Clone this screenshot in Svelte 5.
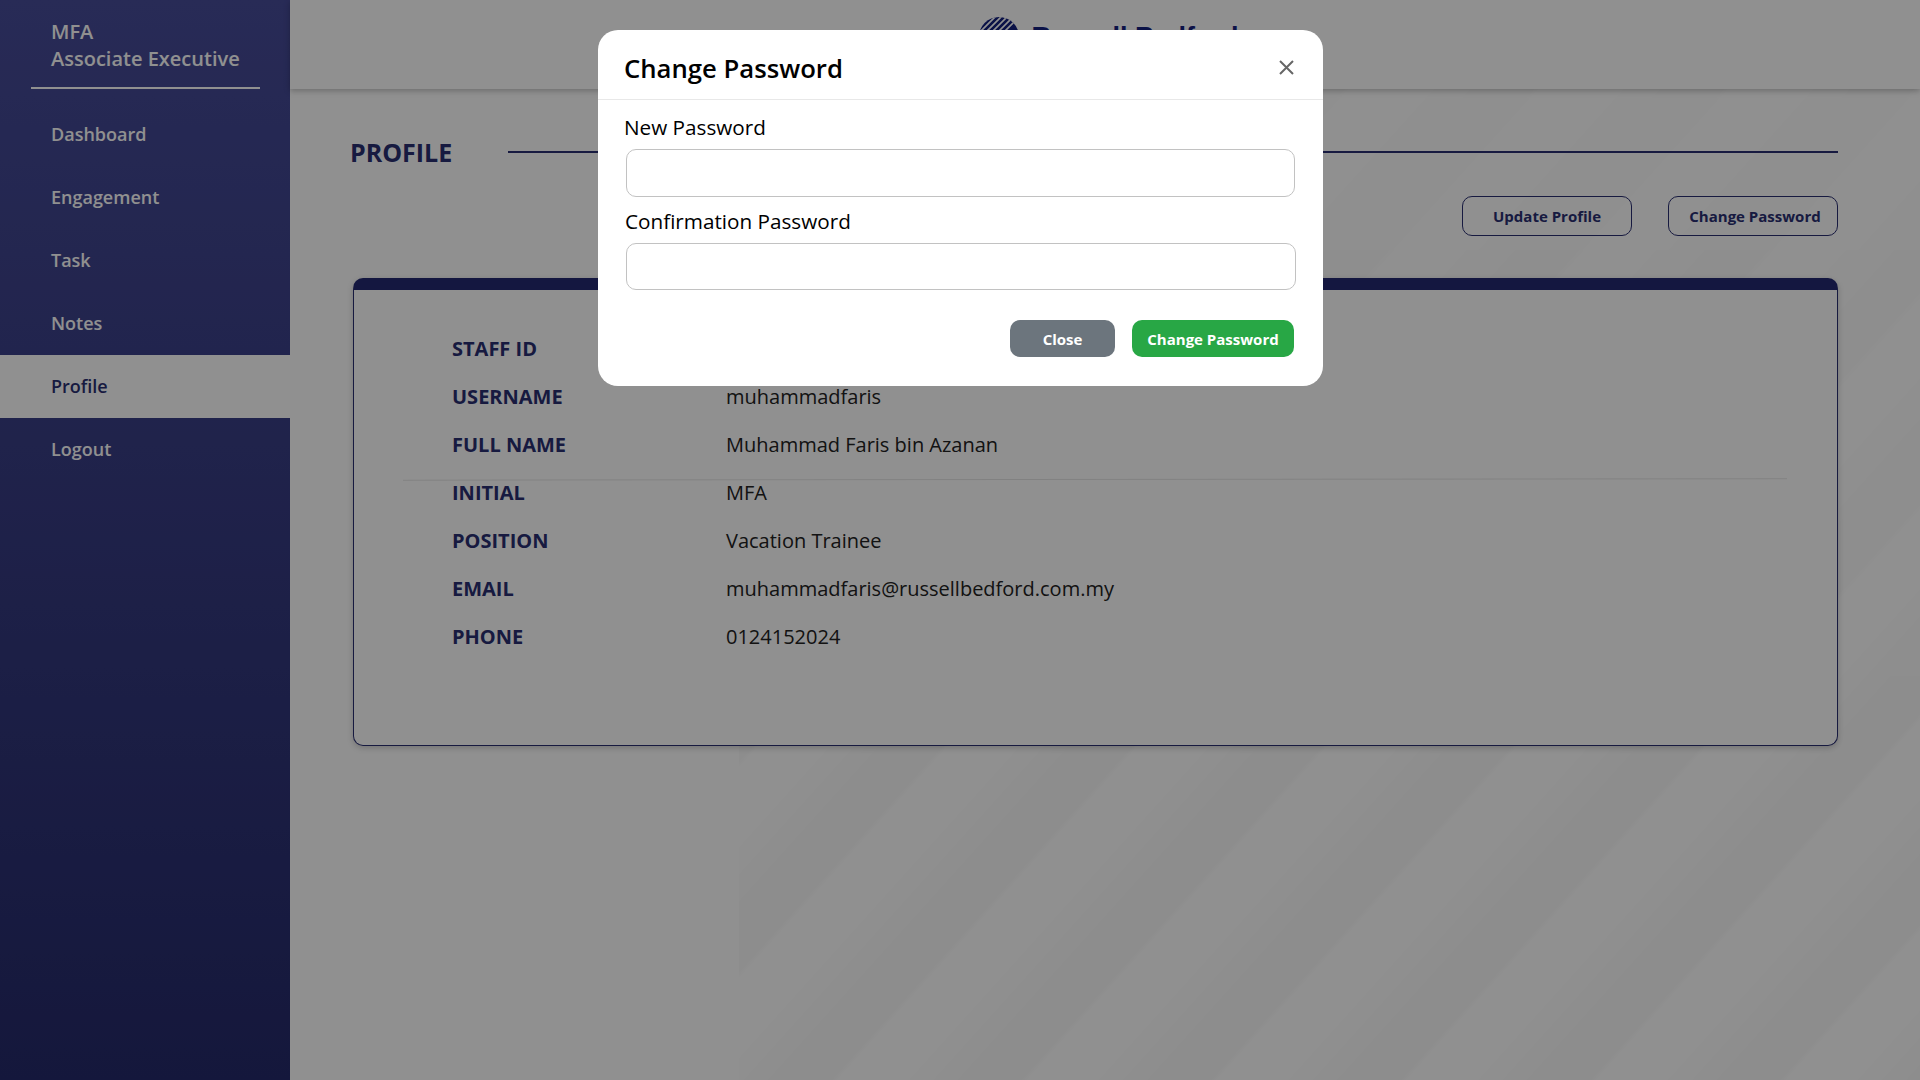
<script>
  const nav = ['Dashboard', 'Engagement', 'Task', 'Notes', 'Profile', 'Logout'];
  const top = [['STAFF ID', ''], ['USERNAME', 'muhammadfaris'], ['FULL NAME', 'Muhammad Faris bin Azanan']];
  const bottom = [['INITIAL', 'MFA'], ['POSITION', 'Vacation Trainee'], ['EMAIL', 'muhammadfaris@russellbedford.com.my'], ['PHONE', '0124152024']];
</script>

<div class="app">
  <aside class="sidebar">
    <div class="who"><div>MFA</div><div>Associate Executive</div></div>
    <nav>
      {#each nav as item}
        <div class="item" class:active={item === 'Profile'}>{item}</div>
      {/each}
    </nav>
  </aside>
  <main>
    <div class="stripes"></div>
    <header>
      <svg class="globe" viewBox="0 0 40 40" width="40" height="40">
        <defs>
          <clipPath id="gc"><circle cx="20" cy="20" r="20" /></clipPath>
        </defs>
        <circle cx="20" cy="20" r="20" fill="#14207f" />
        <g clip-path="url(#gc)" stroke="#fff" stroke-width="1.7">
          <path d="M-2 12 L14 -4 M-2 18 L20 -4 M-2 24 L26 -4 M0 28 L32 -4 M4 30 L38 -4 M10 30 L42 -2" />
        </g>
      </svg>
      <span class="brand">Russell Bedford</span>
    </header>
    <section class="content">
      <div class="title-row">
        <h1>PROFILE</h1>
        <div class="rule"></div>
      </div>
      <div class="actions">
        <button class="outline update">Update Profile</button>
        <button class="outline change">Change Password</button>
      </div>
      <div class="card">
        {#each top as [k, v]}
          <div class="row"><span class="key">{k}</span><span class="val">{v}</span></div>
        {/each}
        <div class="split"></div>
        {#each bottom as [k, v]}
          <div class="row"><span class="key">{k}</span><span class="val">{v}</span></div>
        {/each}
      </div>
    </section>
  </main>
  <div class="overlay">
    <div class="modal">
      <div class="modal-head">
        <h2>Change Password</h2>
        <svg class="x" viewBox="0 0 15 15" width="15" height="15"><path d="M1 1 L14 14 M14 1 L1 14" stroke="#666" stroke-width="2" fill="none" /></svg>
      </div>
      <div class="modal-body">
        <div class="label">New Password</div>
        <input type="password" class="first" />
        <div class="label second-label">Confirmation Password</div>
        <input type="password" class="second" />
        <div class="modal-actions">
          <button class="grey">Close</button>
          <button class="green">Change Password</button>
        </div>
      </div>
    </div>
  </div>
</div>

<style>
  :global(body) { margin: 0; font-family: "Open Sans", sans-serif; }
  .app { display: flex; height: 100vh; width: 100vw; overflow: hidden; position: relative; background: #fff; }
  .sidebar { width: 290px; flex: none; background: linear-gradient(to bottom, #474c99, #252a6a); color: #fff; }
  .who { margin: 0 30px 0 31px; padding: 18px 0 0 20px; box-sizing: border-box; border-bottom: 2px solid #fff; height: 89px; font-size: 20px; font-weight: 600; line-height: 27px; }
  nav { margin-top: 14px; }
  .item { height: 63px; line-height: 62px; padding-left: 51px; font-size: 18px; font-weight: 600; }
  .item.active { background: #fff; color: #2a2f72; }
  main { flex: 1; position: relative; min-width: 0; }
  .stripes { position: absolute; left: 449px; top: 89px; right: 0; bottom: 0;
    background: repeating-linear-gradient(132deg, rgba(0,0,0,0) 31px, rgba(0,0,0,0) 80px, rgba(0,0,0,.02) 125px, rgba(0,0,0,.02) 168px, rgba(0,0,0,0) 172px);
    -webkit-mask-image: linear-gradient(to bottom, rgba(0,0,0,.35), #000 70%);
    mask-image: linear-gradient(to bottom, rgba(0,0,0,.35), #000 70%); }
  header { height: 89px; position: relative; background: #fff; box-shadow: 0 2px 6px rgba(0,0,0,.25); display: flex; align-items: flex-start; justify-content: center; padding-top: 17px; box-sizing: border-box; gap: 12px; padding-left: 8px; }
  .globe { flex: none; }
  .brand { font-family: "Liberation Sans", sans-serif; font-weight: 700; font-size: 27px; line-height: 40px; color: #14207f; }
  .content { position: relative; padding: 45px 82px 0 60px; }
  .title-row { display: flex; align-items: center; height: 36px; }
  h1 { margin: 0; font-size: 25px; font-weight: 700; color: #2a2f72; width: 158px; flex: none; }
  .rule { flex: 1; height: 2px; background: #2a2f72; }
  .actions { display: flex; justify-content: flex-end; gap: 36px; margin-top: 26px; }
  .outline { height: 40px; box-sizing: border-box; background: transparent; border: 1px solid #2a2f72; border-radius: 10px; color: #2a2f72; font: 700 15px "Open Sans", sans-serif; padding: 0; }
  .update { width: 170px; }
  .change { width: 170px; padding-left: 4px; }
  .card { margin: 42px 0 0 3px; height: 468px; box-sizing: border-box; border: 1px solid #2a2f72; border-top: 12px solid #242a72; border-radius: 10px; background: #fff; padding-top: 34px; box-shadow: 0 2px 6px rgba(0,0,0,.2); }
  .row { display: grid; grid-template-columns: 274px 1fr; height: 48px; align-items: center; padding-left: 98px; font-size: 20px; }
  .key { font-weight: 700; color: #2a2f72; }
  .val { color: #222; }
  .split { height: 1px; margin: 11px 50px -12px 49px; background: rgba(0,0,0,.1); transform: rotate(-.054deg); }
  .overlay { position: absolute; inset: 0; background: rgba(0,0,0,.435); display: flex; justify-content: center; align-items: flex-start; padding-top: 30px; box-sizing: border-box; }
  .modal { width: 725px; height: 356px; background: #fff; border-radius: 20px; margin-left: 1px; color: #000; }
  .modal-head { height: 70px; box-sizing: border-box; border-bottom: 1px solid #e8e8e8; display: flex; align-items: center; justify-content: space-between; padding: 8px 29px 0 26px; }
  h2 { margin: 0; font-size: 25.7px; font-weight: 600; line-height: 34px; }
  .x { flex: none; margin-bottom: 2px; }
  .modal-body { padding: 14px 29px 0 26px; }
  .label { font-size: 20.7px; font-weight: 500; line-height: 27px; }
  .second-label { margin-top: 11px; margin-left: 1px; }
  input { display: block; box-sizing: border-box; width: 669px; margin: 8px 0 0 2px; background: #fff; border: 1px solid #c2c2c2; border-radius: 10px; padding: 0; }
  .first { height: 48px; }
  .second { height: 47px; width: 670px; }
  .modal-actions { display: flex; justify-content: flex-end; gap: 17px; margin-top: 30px; }
  .modal-actions button { height: 37px; border: 0; border-radius: 10px; color: #fff; font: 700 15px "Open Sans", sans-serif; padding: 0; }
  .grey { width: 105px; background: #6c757d; }
  .green { width: 162px; background: #28a745; }
</style>
